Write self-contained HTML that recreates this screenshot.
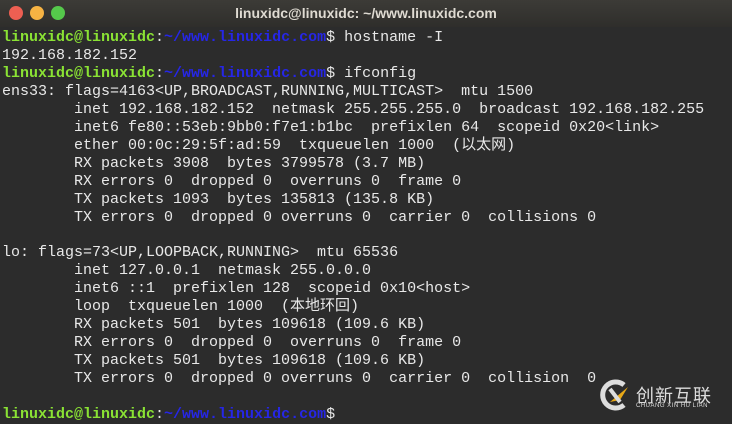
<!DOCTYPE html>
<html><head><meta charset="utf-8"><style>
body{margin:0;width:732px;height:424px;overflow:hidden;background:#2c2c2c;}
.t{position:absolute;left:0;top:0;width:732px;height:27px;background:linear-gradient(#3c3b37,#2f2e2b);color:#dfdbd2;font:bold 14px "Liberation Sans",sans-serif;text-align:center;line-height:26px;}
.d{position:absolute;top:6px;width:14px;height:14px;border-radius:50%;}
pre{position:absolute;left:2px;top:29px;margin:0;font:15px/17.95px "Liberation Mono","Noto Sans CJK SC",monospace;color:#e8e8e8;}
.g{color:#8ae234;font-weight:bold}.b{color:#2626e6;font-weight:bold}
.logo{position:absolute;left:598px;top:378px;color:#ddd;font-family:"Liberation Sans","Noto Sans CJK SC",sans-serif;}
</style></head><body>
<div class="t">linuxidc@linuxidc: ~/www.linuxidc.com</div>
<div class="d" style="left:9px;background:#ed5f52"></div>
<div class="d" style="left:30px;background:#f6b343"></div>
<div class="d" style="left:51px;background:#55c84b"></div>
<pre><span class="g">linuxidc@linuxidc</span>:<span class="b">~/www.linuxidc.com</span>$ hostname -I
192.168.182.152
<span class="g">linuxidc@linuxidc</span>:<span class="b">~/www.linuxidc.com</span>$ ifconfig
ens33: flags=4163&lt;UP,BROADCAST,RUNNING,MULTICAST&gt;  mtu 1500
        inet 192.168.182.152  netmask 255.255.255.0  broadcast 192.168.182.255
        inet6 fe80::53eb:9bb0:f7e1:b1bc  prefixlen 64  scopeid 0x20&lt;link&gt;
        ether 00:0c:29:5f:ad:59  txqueuelen 1000  (以太网)
        RX packets 3908  bytes 3799578 (3.7 MB)
        RX errors 0  dropped 0  overruns 0  frame 0
        TX packets 1093  bytes 135813 (135.8 KB)
        TX errors 0  dropped 0 overruns 0  carrier 0  collisions 0

lo: flags=73&lt;UP,LOOPBACK,RUNNING&gt;  mtu 65536
        inet 127.0.0.1  netmask 255.0.0.0
        inet6 ::1  prefixlen 128  scopeid 0x10&lt;host&gt;
        loop  txqueuelen 1000  (本地环回)
        RX packets 501  bytes 109618 (109.6 KB)
        RX errors 0  dropped 0  overruns 0  frame 0
        TX packets 501  bytes 109618 (109.6 KB)
        TX errors 0  dropped 0 overruns 0  carrier 0  collision  0

<span class="g">linuxidc@linuxidc</span>:<span class="b">~/www.linuxidc.com</span>$</pre>
<div class="logo">
<svg width="36" height="34" style="position:absolute;left:0;top:0" viewBox="0 0 36 34"><path d="M26 7A13 13 0 1 0 26 27" stroke="#ddd" stroke-width="5" fill="none"/><path d="M12 24L30 9L22 22Z" fill="#e8a817"/><path d="M12 11L22 24" stroke="#ddd" stroke-width="4"/></svg>
<div style="position:absolute;left:38px;top:4px;font-size:18px;white-space:nowrap;letter-spacing:1px">创新互联</div>
<div style="position:absolute;left:38px;top:25px;font-size:6px;white-space:nowrap;letter-spacing:0.5px">CHUANG XIN HU LIAN</div>
</div>
</body></html>
